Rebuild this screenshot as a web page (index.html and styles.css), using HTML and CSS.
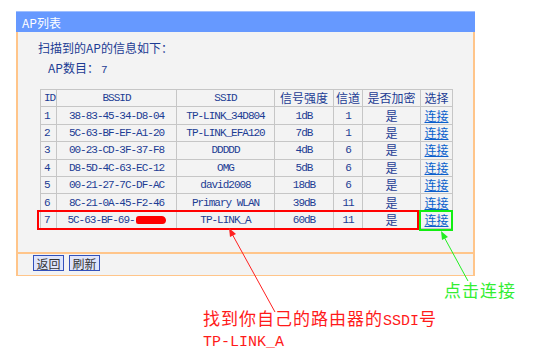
FILE: index.html
```html
<!DOCTYPE html>
<html lang="zh-CN">
<head>
  <meta charset="UTF-8">
  <title>AP列表</title>
  <link rel="stylesheet" href="styles.css">
</head>
<body>

  <div class="panel">
    <div class="panel-title">AP列表</div>

    <div class="panel-body">
      <p class="intro">扫描到的AP的信息如下：</p>
      <p class="count"><span class="count-label">AP数目：</span><span class="count-num">7</span></p>

      <table class="ap-table">
        <colgroup>
          <col style="width: 16px">
          <col style="width: 120px">
          <col style="width: 98px">
          <col style="width: 59px">
          <col style="width: 29px">
          <col style="width: 58px">
          <col style="width: 32px">
        </colgroup>
        <tr>
          <th class="mono left">ID</th>
          <th class="mono">BSSID</th>
          <th class="mono">SSID</th>
          <th>信号强度</th>
          <th>信道</th>
          <th>是否加密</th>
          <th>选择</th>
        </tr>
        <tr>
          <td class="mono left">1</td>
          <td class="mono">38-83-45-34-D8-04</td>
          <td class="mono">TP-LINK_34D804</td>
          <td class="mono">1dB</td>
          <td class="mono">1</td>
          <td>是</td>
          <td><a href="#">连接</a></td>
        </tr>
        <tr>
          <td class="mono left">2</td>
          <td class="mono">5C-63-BF-EF-A1-20</td>
          <td class="mono">TP-LINK_EFA120</td>
          <td class="mono">7dB</td>
          <td class="mono">1</td>
          <td>是</td>
          <td><a href="#">连接</a></td>
        </tr>
        <tr>
          <td class="mono left">3</td>
          <td class="mono">00-23-CD-3F-37-F8</td>
          <td class="mono">DDDDD</td>
          <td class="mono">4dB</td>
          <td class="mono">6</td>
          <td>是</td>
          <td><a href="#">连接</a></td>
        </tr>
        <tr>
          <td class="mono left">4</td>
          <td class="mono">D8-5D-4C-63-EC-12</td>
          <td class="mono">OMG</td>
          <td class="mono">5dB</td>
          <td class="mono">6</td>
          <td>是</td>
          <td><a href="#">连接</a></td>
        </tr>
        <tr>
          <td class="mono left">5</td>
          <td class="mono">00-21-27-7C-DF-AC</td>
          <td class="mono">david2008</td>
          <td class="mono">18dB</td>
          <td class="mono">6</td>
          <td>是</td>
          <td><a href="#">连接</a></td>
        </tr>
        <tr>
          <td class="mono left">6</td>
          <td class="mono">8C-21-0A-45-F2-46</td>
          <td class="mono">Primary WLAN</td>
          <td class="mono">39dB</td>
          <td class="mono">11</td>
          <td>是</td>
          <td><a href="#">连接</a></td>
        </tr>
        <tr>
          <td class="mono left">7</td>
          <td class="mono">5C-63-BF-69-<span class="blot"></span></td>
          <td class="mono">TP-LINK_A</td>
          <td class="mono">60dB</td>
          <td class="mono">11</td>
          <td>是</td>
          <td><a href="#">连接</a></td>
        </tr>
      </table>
    </div>

    <div class="panel-foot">
      <button type="button">返回</button>
      <button type="button">刷新</button>
    </div>
  </div>

  <!-- annotations drawn over the screenshot -->
  <div class="mark mark-red"></div>
  <div class="mark mark-green"></div>

  <svg class="arrows" width="540" height="357" viewBox="0 0 540 357">
    <line x1="275" y1="312" x2="231" y2="232" stroke="#ff2020" stroke-width="1"/>
    <polygon points="229,228 236,234 230,237" fill="#ff2020"/>
    <line x1="468" y1="281" x2="443" y2="235" stroke="#22ee22" stroke-width="1"/>
    <polygon points="441,231 448,237 442,240" fill="#22ee22"/>
  </svg>

  <div class="note note-green">点击连接</div>
  <div class="note note-red">找到你自己的路由器的<span class="latin">SSDI</span>号<br><span class="latin">TP-LINK_A</span></div>

</body>
</html>
```

FILE: styles.css
```css
body {
  margin: 0;
  background-color: #fff;
  font-family: "Noto Sans CJK SC", "Liberation Sans", sans-serif;
  font-size: 12px;
  color: #1c3c94;
  width: 540px;
  height: 357px;
  position: relative;
  overflow: hidden;
}

.panel {
  margin: 11px 0 0 16px;
  width: 459px;
}
.panel-title {
  height: 21px;
  line-height: 21px;
  background-color: #6699ff;
  border-top: 1px solid #9fbfff;
  color: #fff;
  padding-left: 6px;
  font-size: 12px;
  box-sizing: border-box;
}
.panel-body {
  background-color: #f3f3f3;
  border-left: 2px solid #ffc58a;
  border-right: 2px solid #ffc58a;
  padding: 8px 0 23px 22px;
}
.intro {
  margin: 0 0 0 -2px;
  line-height: 16px;
}
.count {
  margin: 4px 0 0 8px;
  line-height: 16px;
}
.count-num {
  display: inline-block;
  margin-left: 2px;
  font-family: "Liberation Mono", monospace;
  font-size: 11px;
}

.ap-table {
  margin-top: 11px;
  width: 412px;
  border-collapse: collapse;
  table-layout: fixed;
}
.ap-table th,
.ap-table td {
  border: 1px solid #c6c6c6;
  height: 16.4px;
  padding: 0;
  text-align: center;
  font-weight: normal;
  font-size: 12px;
  line-height: 16px;
  white-space: nowrap;
  overflow: hidden;
}
.ap-table .mono {
  font-family: "Liberation Mono", monospace;
  font-size: 11px;
  letter-spacing: -1px;
}
.ap-table .left {
  text-align: left;
  padding-left: 3px;
}
.ap-table a {
  color: #0a5fcc;
  text-decoration: underline;
}
.blot {
  display: inline-block;
  width: 30px;
  height: 8px;
  margin-left: 1px;
  background-color: #f00;
  border-radius: 4px 6px 5px 3px;
  vertical-align: -1px;
}

.panel-foot {
  background-color: #f3f3f3;
  border: 2px solid #ffc58a;
  border-bottom-width: 1px;
  height: 20px;
  padding: 1px 0 0 15px;
  display: flex;
  gap: 5px;
  align-items: flex-start;
}
.panel-foot button {
  width: 31px;
  height: 16px;
  padding: 0;
  background-color: #dfe5fb;
  border: 1px solid #3350bb;
  font-family: "Noto Sans CJK SC", sans-serif;
  font-size: 12px;
  line-height: 13px;
  color: #333;
}

.mark {
  position: absolute;
  box-sizing: border-box;
  border: 2px solid;
}
.mark-red {
  left: 37px;
  top: 210px;
  width: 382px;
  height: 20px;
  border-color: #ff0000;
}
.mark-green {
  left: 419px;
  top: 210px;
  width: 34px;
  height: 21px;
  border-color: #11ee11;
}
.arrows {
  position: absolute;
  left: 0;
  top: 0;
  pointer-events: none;
}

.note {
  position: absolute;
  font-family: "Noto Sans CJK SC", sans-serif;
  font-size: 17px;
  line-height: 17px;
  letter-spacing: 1px;
}
.note .latin {
  font-family: "Liberation Mono", monospace;
  font-size: 15px;
  letter-spacing: 0;
}
.note-green {
  left: 444px;
  top: 281px;
  color: #33ee33;
}
.note-red {
  left: 203px;
  top: 309px;
  color: #ff1a1a;
}
```
